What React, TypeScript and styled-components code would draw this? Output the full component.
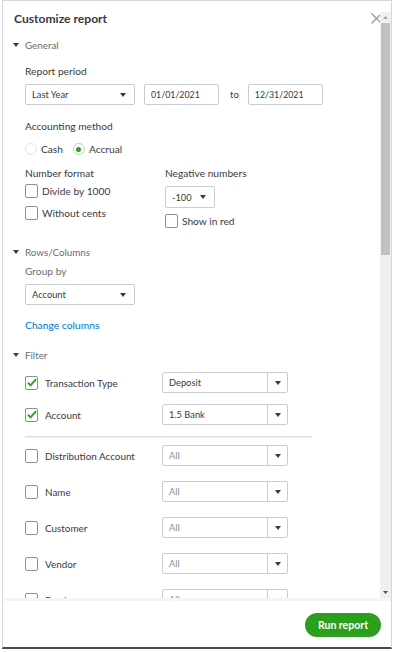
import React from 'react';
import styled, { createGlobalStyle } from 'styled-components';

const GlobalStyle = createGlobalStyle`
  html, body {
    margin: 0;
    padding: 0;
    background: #fff;
  }
  body {
    font-family: Lato, 'Open Sans', sans-serif;
    color: #393a3d;
  }
`;

const Dialog = styled.div`
  box-sizing: border-box;
  width: 390px;
  height: 649px;
  margin-left: 2px;
  border: 1px solid #d4d7dc;
  border-bottom: 2px solid #4a4a4a;
  padding-top: 11px;
  display: flex;
  flex-direction: column;
  background: #fff;
`;

const Main = styled.div`
  flex: 1;
  min-height: 0;
  display: flex;
`;

const Scroller = styled.div`
  flex: 1;
  min-width: 0;
  overflow: hidden;
  padding-left: 11px;
`;

const ScrollBar = styled.div`
  width: 11px;
  flex-shrink: 0;
  display: flex;
  flex-direction: column;
  background: #f0f0f0;
`;

const ScrollButton = styled.div`
  height: 11px;
  display: flex;
  align-items: center;
  justify-content: center;
`;

const Thumb = styled.div`
  height: 232px;
  margin: 0 1px 0 1px;
  background: #c1c1c1;
`;

const TrackRest = styled.div`
  flex: 1;
`;

const Header = styled.div`
  display: flex;
  align-items: center;
  justify-content: space-between;
  height: 13px;
`;

const Title = styled.h1`
  margin: 0;
  font-size: 12.1px;
  line-height: 13px;
  font-weight: 700;
  color: #393a3d;
`;

const Close = styled.button`
  width: 12px;
  height: 12px;
  margin-right: -2px;
  padding: 0;
  border: 0;
  background: none;
  display: flex;
  align-items: center;
  justify-content: center;
`;

const SectionToggle = styled.div<{ $mt: number }>`
  display: flex;
  align-items: center;
  gap: 6px;
  margin-top: ${(p) => p.$mt}px;
  margin-left: -1px;
  font-size: 9.8px;
  line-height: 14px;
  color: #6b6c72;
`;

const SectionBody = styled.div`
  padding-left: 11px;
`;

const Label = styled.div<{ $mt?: number; $muted?: boolean }>`
  margin-top: ${(p) => p.$mt ?? 0}px;
  font-size: 10.2px;
  line-height: 14px;
  color: ${(p) => (p.$muted ? '#6b6c72' : '#393a3d')};
`;

const Row = styled.div<{ $mt?: number; $gap?: number }>`
  display: flex;
  align-items: center;
  gap: ${(p) => p.$gap ?? 0}px;
  margin-top: ${(p) => p.$mt ?? 0}px;
`;

const Columns = styled.div`
  display: flex;
  align-items: flex-start;
  margin-top: 10px;
`;

const Column = styled.div<{ $width?: number }>`
  display: flex;
  flex-direction: column;
  width: ${(p) => (p.$width ? `${p.$width}px` : 'auto')};
`;

const SelectBox = styled.div<{ $width: number; $height?: number }>`
  box-sizing: border-box;
  width: ${(p) => p.$width}px;
  height: ${(p) => p.$height ?? 21}px;
  border: 1px solid #c9ccd1;
  border-radius: 2px;
  display: flex;
  align-items: center;
  justify-content: space-between;
  padding: 0 8px 0 6px;
  font-size: 9.3px;
  color: #393a3d;
  background: #fff;
`;

const DateBox = styled.div`
  box-sizing: border-box;
  width: 75px;
  height: 21px;
  border: 1px solid #c9ccd1;
  border-radius: 2px;
  display: flex;
  align-items: center;
  padding-left: 6px;
  font-size: 8.8px;
  color: #393a3d;
`;

const ToText = styled.span`
  font-size: 9.5px;
  color: #393a3d;
  margin: 0 9px 0 11px;
`;

const SplitSelect = styled.div`
  box-sizing: border-box;
  width: 126px;
  height: 21px;
  border: 1px solid #c9ccd1;
  border-radius: 2px;
  display: flex;
  font-size: 9.3px;
  color: #393a3d;
`;

const SplitValue = styled.div<{ $muted?: boolean }>`
  flex: 1;
  display: flex;
  align-items: center;
  padding-left: 6px;
  color: ${(p) => (p.$muted ? '#8d9096' : '#393a3d')};
`;

const SplitArrow = styled.div`
  width: 19px;
  border-left: 1px solid #c9ccd1;
  display: flex;
  align-items: center;
  justify-content: center;
`;

const Box = styled.span`
  box-sizing: border-box;
  width: 13px;
  height: 14px;
  border: 1px solid #8d9096;
  border-radius: 2px;
  flex-shrink: 0;
  display: flex;
  align-items: center;
  justify-content: center;
  background: #fff;
`;

const CheckLabel = styled.span`
  font-size: 10.2px;
  line-height: 14px;
  color: #393a3d;
`;

const Radio = styled.span<{ $on?: boolean }>`
  box-sizing: border-box;
  width: 12px;
  height: 12px;
  border-radius: 50%;
  border: 1px solid ${(p) => (p.$on ? '#c9ccd1' : '#e3e5e8')};
  display: flex;
  align-items: center;
  justify-content: center;
  &::after {
    content: '';
    width: 5px;
    height: 5px;
    border-radius: 50%;
    background: ${(p) => (p.$on ? '#2ca01c' : 'transparent')};
  }
`;

const RadioLabel = styled.span<{ $mr?: number }>`
  font-size: 10.2px;
  line-height: 14px;
  margin: 0 ${(p) => p.$mr ?? 0}px 0 4px;
`;

const Link = styled.a`
  display: block;
  margin-top: 13px;
  font-size: 10.3px;
  line-height: 14px;
  color: #0077c5;
  text-decoration: none;
`;

const FilterRow = styled.div<{ $mt: number }>`
  display: flex;
  align-items: center;
  margin-top: ${(p) => p.$mt}px;
  height: 21px;
`;

const FilterName = styled.span`
  width: 117px;
  margin-left: 7px;
  font-size: 9.9px;
  color: #393a3d;
`;

const Divider = styled.div`
  width: 287px;
  height: 1px;
  margin-top: 11px;
  background: #dcdee2;
  border-bottom: 1px solid #eceef1;
`;

const Footer = styled.div`
  flex-shrink: 0;
  height: 34px;
  border-top: 3px solid #f4f5f8;
  display: flex;
  justify-content: flex-end;
  align-items: flex-start;
  padding: 12px 10px 0 0;
`;

const RunButton = styled.button`
  width: 76px;
  height: 24px;
  border: 0;
  border-radius: 12px;
  background: #2ca01c;
  color: #fff;
  font-family: Lato, 'Open Sans', sans-serif;
  font-size: 10.5px;
  font-weight: 700;
  padding: 0;
`;

const Caret = () => (
  <svg width="6" height="4" viewBox="0 0 6 4">
    <path d="M0 0h6L3 4z" fill="#393a3d" />
  </svg>
);

const Toggle = () => (
  <svg width="6" height="4" viewBox="0 0 6 4">
    <path d="M0 0h6L3 4z" fill="#393a3d" />
  </svg>
);

const Arrow = ({ up }: { up?: boolean }) => (
  <svg width="5" height="3" viewBox="0 0 5 3">
    <path d={up ? 'M0 3h5L2.5 0z' : 'M0 0h5L2.5 3z'} fill={up ? '#a3a3a3' : '#505050'} />
  </svg>
);

const Tick = () => (
  <svg width="10" height="9" viewBox="0 0 10 9">
    <path d="M1 4.6l2.6 2.7L9 1.2" stroke="#2ca01c" strokeWidth="1.9" fill="none" />
  </svg>
);

const CloseIcon = () => (
  <svg width="11" height="11" viewBox="0 0 11 11">
    <path d="M0.5 0.5l10 10M10.5 0.5l-10 10" stroke="#8d9096" strokeWidth="1.2" />
  </svg>
);

const Checkbox = ({ label, checked }: { label: string; checked?: boolean }) => (
  <>
    <Box>{checked && <Tick />}</Box>
    <CheckLabel>{label}</CheckLabel>
  </>
);

const filters = [
  { name: 'Transaction Type', value: 'Deposit', checked: true, mt: 10 },
  { name: 'Account', value: '1.5 Bank', checked: true, mt: 11 },
  { name: 'Distribution Account', value: 'All', mt: 7, divider: true },
  { name: 'Name', value: 'All', mt: 15 },
  { name: 'Customer', value: 'All', mt: 15 },
  { name: 'Vendor', value: 'All', mt: 15 },
  { name: 'Employee', value: 'All', mt: 15 },
];

const App = () => {
  return (
    <>
      <GlobalStyle />
      <Dialog>
        <Main>
          <Scroller>
            <Header>
              <Title>Customize report</Title>
              <Close aria-label="Close">
                <CloseIcon />
              </Close>
            </Header>

            <SectionToggle $mt={13}>
              <Toggle />
              General
            </SectionToggle>
            <SectionBody>
              <Label $mt={12}>Report period</Label>
              <Row $mt={6}>
                <SelectBox $width={110}>
                  Last Year
                  <Caret />
                </SelectBox>
                <DateBox style={{ marginLeft: 9 }}>01/01/2021</DateBox>
                <ToText>to</ToText>
                <DateBox>12/31/2021</DateBox>
              </Row>

              <Label $mt={14}>Accounting method</Label>
              <Row $mt={9}>
                <Radio />
                <RadioLabel $mr={10}>Cash</RadioLabel>
                <Radio $on />
                <RadioLabel>Accrual</RadioLabel>
              </Row>

              <Columns>
                <Column $width={140}>
                  <Label>Number format</Label>
                  <Row $mt={4} $gap={4}>
                    <Checkbox label="Divide by 1000" />
                  </Row>
                  <Row $mt={8} $gap={4}>
                    <Checkbox label="Without cents" />
                  </Row>
                </Column>
                <Column>
                  <Label>Negative numbers</Label>
                  <Row $mt={6}>
                    <SelectBox $width={50} $height={22}>
                      -100
                      <Caret />
                    </SelectBox>
                  </Row>
                  <Row $mt={6} $gap={4}>
                    <Checkbox label="Show in red" />
                  </Row>
                </Column>
              </Columns>
            </SectionBody>

            <SectionToggle $mt={17}>
              <Toggle />
              Rows/Columns
            </SectionToggle>
            <SectionBody>
              <Label $mt={5} $muted>
                Group by
              </Label>
              <Row $mt={6}>
                <SelectBox $width={110}>
                  Account
                  <Caret />
                </SelectBox>
              </Row>
              <Link>Change columns</Link>
            </SectionBody>

            <SectionToggle $mt={16}>
              <Toggle />
              Filter
            </SectionToggle>
            <SectionBody>
              {filters.map((f) => (
                <React.Fragment key={f.name}>
                  {f.divider && <Divider />}
                  <FilterRow $mt={f.mt}>
                    <Box>{f.checked && <Tick />}</Box>
                    <FilterName>{f.name}</FilterName>
                    <SplitSelect>
                      <SplitValue $muted={f.value === 'All'}>{f.value}</SplitValue>
                      <SplitArrow>
                        <Caret />
                      </SplitArrow>
                    </SplitSelect>
                  </FilterRow>
                </React.Fragment>
              ))}
            </SectionBody>
          </Scroller>
          <ScrollBar>
            <ScrollButton>
              <Arrow up />
            </ScrollButton>
            <Thumb />
            <TrackRest />
            <ScrollButton>
              <Arrow />
            </ScrollButton>
          </ScrollBar>
        </Main>
        <Footer>
          <RunButton>Run report</RunButton>
        </Footer>
      </Dialog>
    </>
  );
};

export default App;
